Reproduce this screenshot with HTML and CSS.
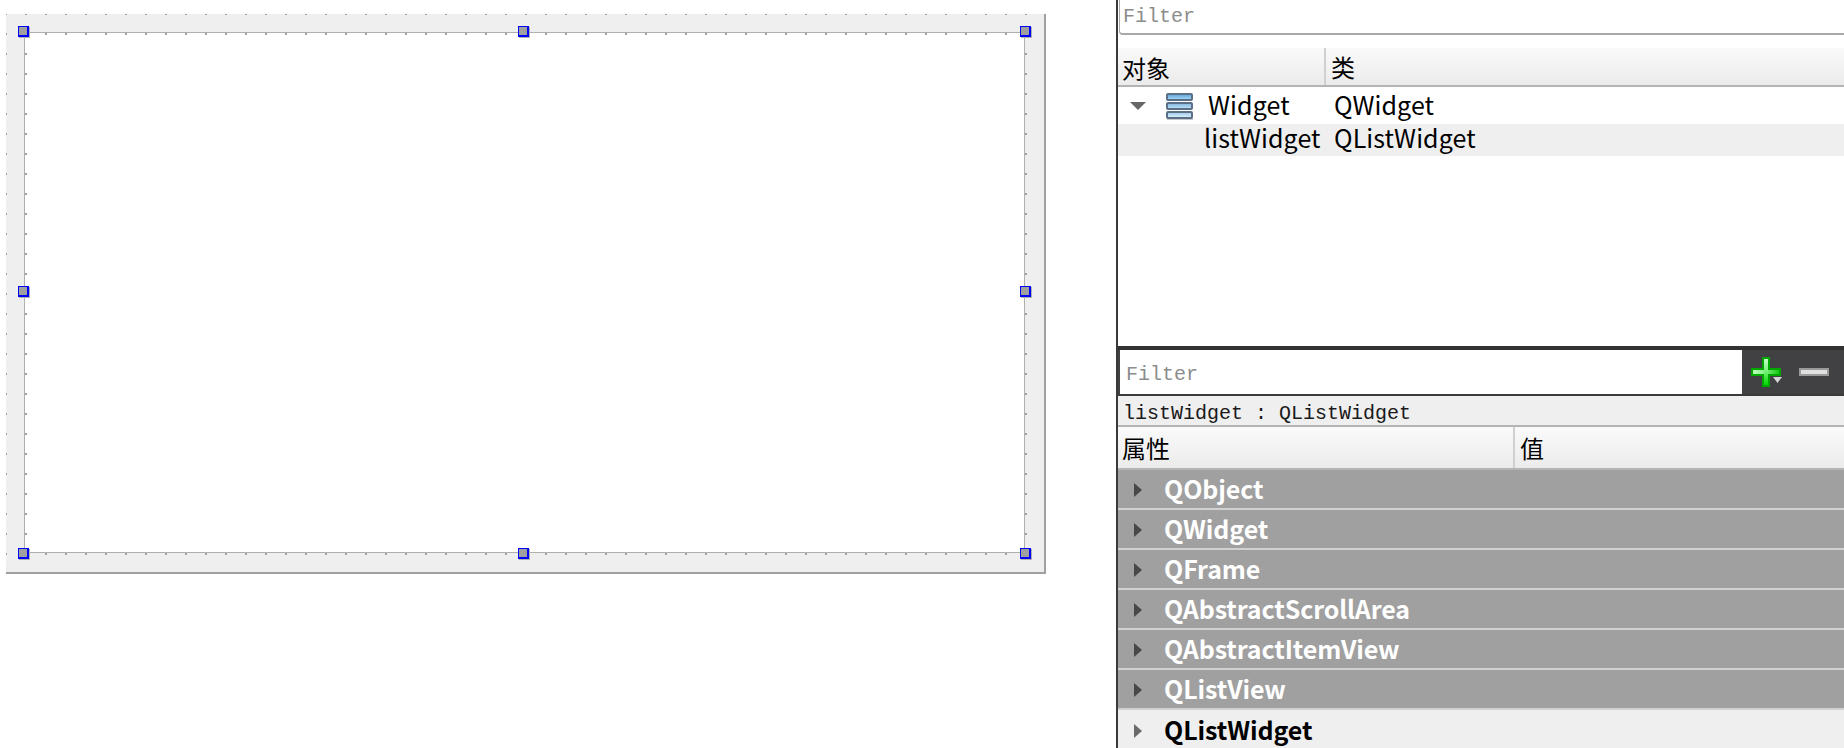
FILE: index.html
```html
<!DOCTYPE html>
<html lang="zh">
<head>
<meta charset="utf-8">
<title>Qt Designer</title>
<link rel="stylesheet" href="styles.css">
</head>
<body>
<main class="canvas">
  <div class="form">
    <div class="inner"></div>
    <span class="handle tl"></span><span class="handle tc"></span><span class="handle tr"></span>
    <span class="handle ml"></span><span class="handle mr"></span>
    <span class="handle bl"></span><span class="handle bc"></span><span class="handle br"></span>
  </div>
</main>
<aside class="panel">
  <div class="obj-filter"><span class="ph">Filter</span></div>
  <div class="head obj-head"><span class="c1">对象</span><span class="c2">类</span></div>
  <div class="tree">
    <div class="row r-top">
      <svg class="arrow-down" width="16" height="8" viewBox="0 0 16 8"><path d="M0 0h16L8 8z" fill="#666"/></svg>
      <svg class="stack" width="28" height="28" viewBox="0 0 28 28">
        <defs>
          <linearGradient id="bar1" x1="0" y1="0" x2="0" y2="1"><stop offset="0" stop-color="#5f9fd8"/><stop offset="1" stop-color="#a8dcfa"/></linearGradient>
          <linearGradient id="bar2" x1="0" y1="0" x2="0" y2="1"><stop offset="0" stop-color="#7fb4de"/><stop offset="1" stop-color="#c4e6fa"/></linearGradient>
          <linearGradient id="bar3" x1="0" y1="0" x2="0" y2="1"><stop offset="0" stop-color="#9cc8ea"/><stop offset="1" stop-color="#e0f2fc"/></linearGradient>
        </defs>
        <rect x="2" y="26" width="26" height="2" fill="#c8c8c8"/>
        <g stroke="#5b7087" stroke-width="2">
          <rect x="2" y="2" width="25" height="6" rx="1" fill="url(#bar1)"/>
          <rect x="2" y="11" width="25" height="6" rx="1" fill="url(#bar2)"/>
          <rect x="2" y="20" width="25" height="6" rx="1" fill="url(#bar3)"/>
        </g>
      </svg>
      <span class="name">Widget</span><span class="cls">QWidget</span>
    </div>
    <div class="row r-sel"><span class="name2">listWidget</span><span class="cls">QListWidget</span></div>
  </div>
  <div class="dark-bar">
    <div class="prop-filter"><span class="ph">Filter</span></div>
    <div class="tools">
      <svg class="plus" width="32" height="30" viewBox="0 0 32 30">
        <defs>
          <linearGradient id="gv" x1="0" y1="0" x2="0" y2="1"><stop offset="0" stop-color="#c8ffc8"/><stop offset="0.5" stop-color="#70f070"/><stop offset="1" stop-color="#00d800"/></linearGradient>
          <linearGradient id="gh" x1="0" y1="0" x2="1" y2="0"><stop offset="0" stop-color="#b8ffb8"/><stop offset="0.5" stop-color="#80f080"/><stop offset="1" stop-color="#10c810"/></linearGradient>
        </defs>
        <path d="M11 0h8v11h11v8H19v11h-8V19H0v-8h11z" fill="#00a800"/>
        <rect x="2" y="13" width="26" height="4" fill="url(#gh)"/>
        <rect x="13" y="2" width="4" height="26" fill="url(#gv)"/>
        <path d="M22 20h9l-4.500 6z" fill="#d4d4d4"/>
      </svg>
      <svg class="minus" width="30" height="8" viewBox="0 0 30 8"><rect width="30" height="8" fill="#9a9a9a"/><rect x="2" y="2" width="26" height="4" fill="#e0e0e0"/></svg>
    </div>
  </div>
  <div class="info">listWidget : QListWidget</div>
  <div class="head prop-head"><span class="p1">属性</span><span class="p2">值</span></div>
  <div class="props">
    <div class="prop"><i class="tri"></i>QObject</div>
    <div class="prop"><i class="tri"></i>QWidget</div>
    <div class="prop"><i class="tri"></i>QFrame</div>
    <div class="prop"><i class="tri"></i>QAbstractScrollArea</div>
    <div class="prop"><i class="tri"></i>QAbstractItemView</div>
    <div class="prop"><i class="tri"></i>QListView</div>
    <div class="prop cur"><i class="tri"></i>QListWidget</div>
  </div>
</aside>
</body>
</html>
```

FILE: styles.css
```css
* { box-sizing: border-box; }
html, body { margin: 0; height: 100%; }
body {
  width: 1844px; height: 748px; overflow: hidden; background: #fff; display: flex;
  font-family: "Noto Sans CJK SC", "Noto Sans", sans-serif; color: #000;
}
.canvas { width: 1116px; flex: none; padding: 14px 0 0 6px; }
.form {
  position: relative; width: 1040px; height: 560px; padding: 18px 0 0 18px;
  border-right: 2px solid #a0a0a0; border-bottom: 2px solid #a0a0a0;
  background:
    repeating-linear-gradient(90deg, transparent 0 1px, #efefef 1px 19px, transparent 19px 20px),
    repeating-linear-gradient(180deg, #a0a0a0 0 1px, #efefef 1px 19px, #a0a0a0 19px 20px);
}
.inner {
  width: 1001px; height: 521px;
  border: 1px solid #b0b0b0;
  background:
    repeating-linear-gradient(90deg, #a0a0a0 0 2px, transparent 2px 20px) left top / 100% 2px no-repeat,
    repeating-linear-gradient(180deg, #a0a0a0 0 2px, transparent 2px 20px) left top / 2px 100% no-repeat,
    #fff;
}
.handle {
  position: absolute; width: 11px; height: 11px; background: #a0a0a0;
  border-style: solid; border-color: #0000ff; border-width: 1px 2px 2px 1px;
  box-shadow: 1px 1px 0 #b0b0b0;
}
.tl { left: 12px; top: 12px; }
.tc { left: 512px; top: 12px; }
.tr { left: 1014px; top: 12px; }
.ml { left: 12px; top: 272px; }
.mr { left: 1014px; top: 272px; }
.bl { left: 12px; top: 534px; }
.bc { left: 512px; top: 534px; }
.br { left: 1014px; top: 534px; }

.panel {
  flex: 1; height: 748px; overflow: hidden; display: flex; flex-direction: column;
  border-left: 2px solid #3a3a3a; background: #fff;
}
.panel > * { flex: none; }
.ph { font: 20px "Liberation Mono", monospace; color: #8c8c8c; }
.obj-filter {
  height: 35px; margin-left: 1px; padding: 0 0 0 3px; display: flex; align-items: center;
  background: #fff; border-left: 1px solid #a8a8a8; border-bottom: 2px solid #a8a8a8;
  border-bottom-left-radius: 4px;
}
.head {
  display: flex; align-items: center; font-size: 24px;
  background: linear-gradient(#fafafa, #ebebeb); border-bottom: 2px solid #b4b4b4;
}
.obj-head { height: 39px; margin-top: 13px; }
.c1 { width: 208px; padding-left: 4px; border-right: 2px solid #d0d0d0; height: 100%; line-height: 39px; }
.c2 { padding-left: 5px; line-height: 39px; }
.tree { height: 259px; font-size: 25px; letter-spacing: 0.1px; }
.row { display: flex; align-items: center; line-height: 1; }
.r-top { height: 37px; }
.r-top .name, .r-top .cls { padding-bottom: 2px; }
.r-sel { height: 32px; background: #efefef; }
.r-sel .name2, .r-sel .cls { padding-bottom: 5px; }
.arrow-down { margin-left: 12px; flex: none; }
.stack { margin-left: 19px; flex: none; }
.name { margin-left: 15px; width: 126px; }
.name2 { margin-left: 86px; width: 130px; }

.dark-bar { height: 50px; background: #414143; border-top: 4px solid #333; border-bottom: 2px solid #3a3a3a; display: flex; }
.prop-filter { width: 622px; margin-left: 2px; background: #fff; padding: 4px 0 0 6px; display: flex; align-items: center; }
.tools { display: flex; align-items: center; padding-left: 9px; gap: 16px; }
.info {
  height: 31px; background: #efefef; font: 20px/35px "Liberation Mono", monospace;
  padding-left: 5px; color: #1a1a1a; border-bottom: 2px solid #b4b4b4; overflow: hidden;
}
.prop-head { height: 43px; }
.p1 { width: 397px; padding-left: 4px; border-right: 2px solid #d0d0d0; height: 100%; line-height: 42px; }
.p2 { padding-left: 5px; line-height: 42px; }
.props { display: flex; flex-direction: column; }
.prop {
  height: 40px; flex: none; background: #a0a0a0; color: #fff; font-size: 25px; font-weight: 700;
  letter-spacing: -0.1px;
  display: flex; align-items: center; border-bottom: 2px solid #d0d0d0; padding: 0 0 3px 16px;
}
.cur { background: #efefef; color: #000; border-bottom: 0; }
.tri {
  width: 0; height: 0; margin: 5px 22px 0 0; flex: none;
  border-left: 8px solid #484848; border-top: 7px solid transparent; border-bottom: 7px solid transparent;
}
.cur .tri { border-left-color: #6a6a6a; }
```
